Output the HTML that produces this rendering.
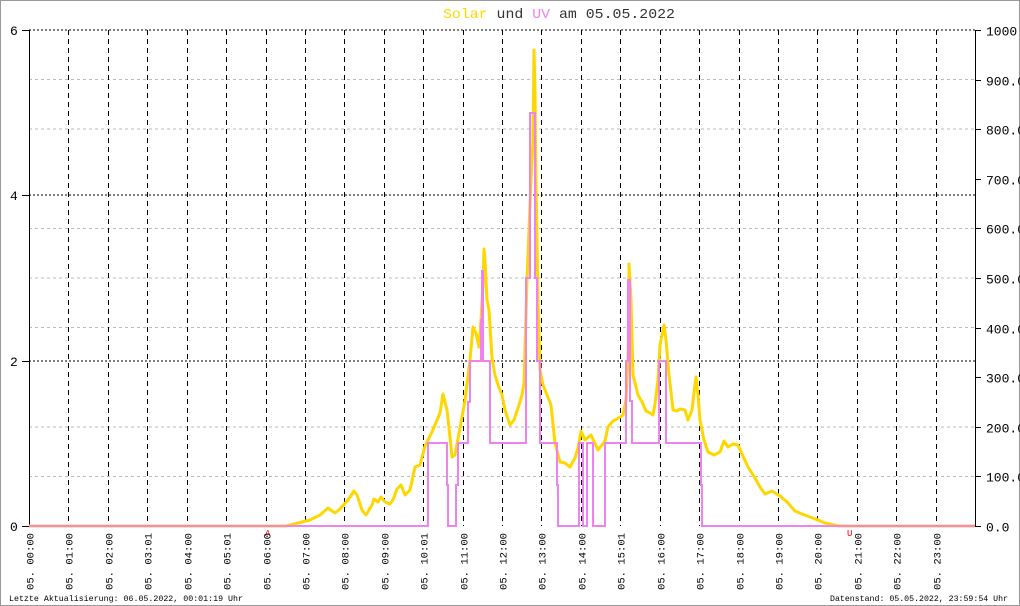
<!DOCTYPE html>
<html><head><meta charset="utf-8"><style>
html,body{margin:0;padding:0;background:#fff}
svg{display:block}
text{font-family:"Liberation Mono","DejaVu Sans Mono",monospace}
</style></head><body>
<svg width="1020" height="606" viewBox="0 0 1020 606" xmlns="http://www.w3.org/2000/svg">
<rect x="0.5" y="0.5" width="1019" height="605" fill="#fff" stroke="#999"/>
<text x="443" y="18" font-size="14" textLength="232" lengthAdjust="spacingAndGlyphs" fill="#333"><tspan fill="#ffd700">Solar</tspan> und <tspan fill="#ee82ee">UV</tspan> am 05.05.2022</text>
<g shape-rendering="crispEdges">
<g stroke="#bbb" stroke-width="1" stroke-dasharray="3,3">
<line x1="29" y1="79.6" x2="975" y2="79.6"/><line x1="29" y1="129.2" x2="975" y2="129.2"/><line x1="29" y1="228.4" x2="975" y2="228.4"/><line x1="29" y1="278" x2="975" y2="278"/><line x1="29" y1="327.6" x2="975" y2="327.6"/><line x1="29" y1="426.8" x2="975" y2="426.8"/><line x1="29" y1="476.4" x2="975" y2="476.4"/>
</g>
<g stroke="#000" stroke-width="1" stroke-dasharray="2,2">
<line x1="29" y1="30" x2="975" y2="30"/><line x1="29" y1="195" x2="975" y2="195"/><line x1="29" y1="361" x2="975" y2="361"/>
</g>
<g stroke="#000" stroke-width="1" stroke-dasharray="5,4" id="vg"></g>
<line x1="29.5" y1="30" x2="29.5" y2="527" stroke="#000"/>
<line x1="975.5" y1="30" x2="975.5" y2="527" stroke="#000"/>
<line x1="22" y1="30.5" x2="29" y2="30.5" stroke="#000"/><line x1="22" y1="195.5" x2="29" y2="195.5" stroke="#000"/><line x1="22" y1="361.5" x2="29" y2="361.5" stroke="#000"/><line x1="22" y1="526.5" x2="29" y2="526.5" stroke="#000"/>
<g stroke="#000" id="rt"></g>
</g>
<g font-size="13" fill="#000">
<text x="10" y="35">6</text><text x="10" y="200">4</text><text x="10" y="366">2</text><text x="10" y="531">0</text>
</g>
<g font-size="13" fill="#000" id="rl"></g>
<polyline fill="none" stroke="#ffd700" stroke-width="3" stroke-linejoin="round" points="29,526 286,526 298,523 310,520 320,515 328,508 335,513 340,509 348,500 354,491 357,495 362,510 366,515 372,505 374,499 378,502 381,497 385,502 390,504 393,500 397,489 401,485 405,495 410,490 415,467 420,465 425,446 432,432 440,413 443,394 447,410 450,437 452,457 455,455 460,428 465,400 470,360 473,327 476,333 479,347 481,320 483,284 484,249 485,260 487,300 489,310 492,358 495,375 498,385 502,395 505,410 510,425 514,420 518,408 522,395 524,383 527,280 529,230 531,180 533,140 534,50 535,90 536,180 538,300 540,370 543,385 547,395 551,405 555,443 560,462 565,463 570,467 575,458 578,448 581,431 585,440 591,435 598,450 605,441 608,427 613,421 620,417 623,415 626,400 628,360 629,290 629,264 631,300 633,375 638,395 642,402 646,411 650,413 653,415 655,404 658,380 660,345 662,335 664,325 666,340 669,375 673,410 677,411 680,409 685,410 688,420 692,410 694,393 696,377 698,395 700,420 704,440 708,452 714,455 720,452 724,441 728,447 733,444 738,445 742,454 748,467 755,478 760,487 765,494 772,491 780,496 787,502 795,511 802,514 810,517 818,520 825,523 830,524 838,526 975,526"/>
<polyline fill="none" stroke="#ee82ee" stroke-width="2" points="29,526 428,526 428,443 447,443 447,485 448,485 448,526 456,526 456,485 458,485 458,443 468,443 468,402 470,402 470,361 481,361 481,320 482,320 482,271 483,271 483,361 490,361 490,443 526,443 526,278 530,278 530,113 535,113 535,278 537,278 537,361 540,361 540,443 557,443 557,485 558,485 558,526 579,526 579,443 583,443 583,526 587,526 587,443 593,443 593,526 605,526 605,443 626,443 626,361 628,361 628,280 630,280 630,401 632,401 632,443 659,443 659,361 666,361 666,443 701,443 701,485 702,485 702,526 975,526"/>
<text x="265" y="536" font-size="9" fill="#e00">A</text>
<text x="847" y="536" font-size="9" fill="#e00">U</text>
<g font-size="10" fill="#000" id="xl"></g>
<text x="9" y="601" font-size="8.5" textLength="234" lengthAdjust="spacingAndGlyphs">Letzte Aktualisierung: 06.05.2022, 00:01:19 Uhr</text>
<text x="830" y="601" font-size="8.5" textLength="178" lengthAdjust="spacingAndGlyphs">Datenstand: 05.05.2022, 23:59:54 Uhr</text>
<script>
var ns="http://www.w3.org/2000/svg";
var lab=["00:00","01:00","02:00","03:01","04:00","05:01","06:00","07:00","08:00","09:00","10:01","11:00","12:00","13:00","14:00","15:01","16:00","17:00","18:00","19:00","20:00","21:00","22:00","23:00"];
var vg=document.getElementById("vg"),xl=document.getElementById("xl");
for(var h=0;h<24;h++){var x=Math.round(29+39.42*h)+0.5;
if(h>0){var l=document.createElementNS(ns,"line");l.setAttribute("x1",x);l.setAttribute("x2",x);l.setAttribute("y1",30);l.setAttribute("y2",526);vg.appendChild(l);}
var t=document.createElementNS(ns,"text");t.setAttribute("transform","translate("+(x+4)+",590) rotate(-90)");t.setAttribute("textLength","57");t.setAttribute("lengthAdjust","spacingAndGlyphs");t.textContent="05.  "+lab[h];xl.appendChild(t);}
var rt=document.getElementById("rt"),rl=document.getElementById("rl");
for(var i=0;i<=10;i++){var y=Math.round(526-49.6*i)+0.5;var l=document.createElementNS(ns,"line");l.setAttribute("x1",975);l.setAttribute("x2",981);l.setAttribute("y1",y);l.setAttribute("y2",y);rt.appendChild(l);
var t=document.createElementNS(ns,"text");t.setAttribute("x",986);t.setAttribute("y",y+5);t.textContent=i==10?"1000":(i*100)+".0";rl.appendChild(t);}
</script>
</svg>
</body></html>
